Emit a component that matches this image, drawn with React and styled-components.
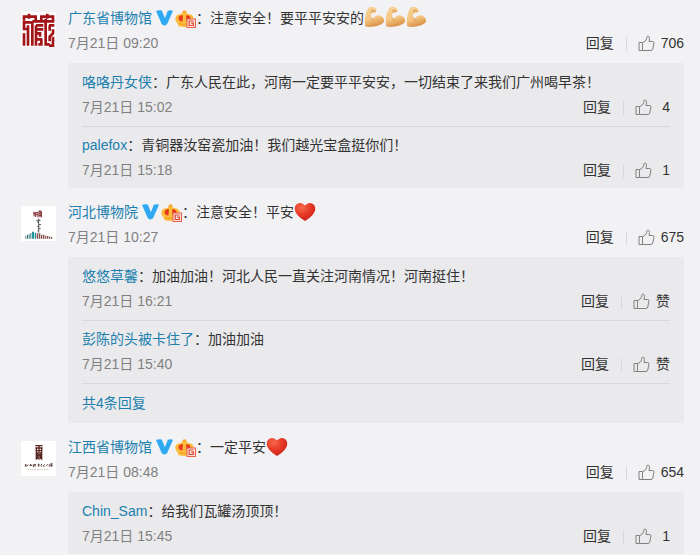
import React from "react";
import styled, { createGlobalStyle } from "styled-components";

const GlobalStyle = createGlobalStyle`
  body {
    margin: 0;
    background: #f2f2f5;
    color: #333;
    font-family: "Liberation Sans", "Noto Sans CJK SC", sans-serif;
    font-size: 14px;
    line-height: 25px;
  }
`;

const List = styled.main`
  display: flex;
  flex-direction: column;
  gap: 12px;
  padding: 6px 16px 12px 21px;
`;

const Comment = styled.article`
  display: flex;
  gap: 12px;
`;

const Avatar = styled.a`
  flex: none;
  width: 35px;
  height: 35px;
  margin-top: 6px;
  background: #fff;

  svg {
    display: block;
  }
`;

const Body = styled.div`
  flex: 1;
  min-width: 0;
`;

const Text = styled.div`
  svg {
    vertical-align: -5px;
  }
`;

const UserLink = styled.a`
  color: #217fae;
  text-decoration: none;

  &:hover {
    text-decoration: underline;
  }
`;

const Badges = styled.span`
  display: inline-flex;
  gap: 2px;
  margin-left: 4px;
  vertical-align: -3px;

  svg {
    vertical-align: top;
  }
`;

const Meta = styled.div`
  display: flex;
  justify-content: space-between;
  color: #808080;
`;

const Actions = styled.div`
  display: flex;
  align-items: center;
`;

const ActionButton = styled.button`
  display: flex;
  align-items: center;
  gap: 6px;
  padding: 0;
  border: 0;
  background: none;
  color: #333;
  font: inherit;
  cursor: pointer;
`;

const Divider = styled.span`
  width: 1px;
  height: 14px;
  margin: 0 11px 0 12px;
  background: #d9d9db;
`;

const Count = styled.span`
  min-width: 12px;
  text-align: right;
`;

const ReplyBox = styled.div`
  margin-top: 7px;
  padding: 1px 14px 0;
  background: #eaeaec;
`;

const Reply = styled.div`
  padding: 6px 0;

  & + & {
    border-top: 1px solid #d9d9db;
  }

  &:last-child {
    padding-bottom: 5px;
  }
`;

const MoreReplies = styled.div`
  padding: 7px 0;
  border-top: 1px solid #d9d9db;
`;

function SealLogo() {
  return (
    <svg width="35" height="35" viewBox="0 0 105 105" aria-hidden="true">
      <g fill="none" stroke="#a31419" strokeWidth="8">
        <path d="M5 14H48M57 14H100M24 5V20M79 5V20M9 14V26M96 14V26M44 14V24M61 14V24" />
        <path d="M5 31H31M9 31V55M5 51H20M21 40V101M9 101V64M5 97H13" />
        <path d="M34 28H100M34 28V101" />
        <path d="M45 40H67M45 40V52H67M45 52V101M57 62V74M45 64H61" />
        <path d="M45 82H64M61 82V101M52 97H61" />
        <path d="M74 20V97H86M84 40H100M86 40V56M96 52V64L86 74V88M96 74V101H84" />
      </g>
    </svg>
  );
}

function HebeiLogo() {
  return (
    <svg width="35" height="35" viewBox="0 0 105 105" aria-hidden="true">
      <g fill="none" stroke="#7c2428" strokeWidth="3">
        <path d="M37 22H42M39 17V31M44 19V33M44 20H51M51 17V34M53 16H62M57 13V34M53 22H62M53 28H61" />
        <path d="M43 26H51M61 17V34" />
      </g>
      <path
        d="M53 38V80M46 43H58M48 48H54M53 56H60M49 62H55M53 68H59M50 75H54"
        fill="none"
        stroke="#555"
        strokeWidth="3"
      />
      <path d="M13 98V89H16V98ZM18 98V86H21V98ZM23 98V85H26V98ZM28 98V81H31V98Z" fill="#377b80" />
      <path d="M33 98V77H39V98ZM41 98V80H45V98Z" fill="#27959a" />
      <path
        d="M47 98V82H52V98ZM54 98V82H58V98ZM60 98V86H64V98ZM66 98V86H70V98ZM72 98V89H76V98ZM78 98V90H82V98ZM84 98V92H88V98ZM90 98V93H94V98Z"
        fill="#865250"
      />
    </svg>
  );
}

function JiangxiLogo() {
  return (
    <svg width="35" height="35" viewBox="0 0 105 105" aria-hidden="true">
      <g fill="none" stroke="#5a2622" strokeWidth="4">
        <path d="M43 14H65M43 21H65M46 21V56M62 21V56M54 14V56" />
        <path d="M46 29H62M50 34V54M58 34V54M46 42H62" />
      </g>
      <g fill="none" stroke="#5b3b39" strokeWidth="3">
        <path d="M11 75L17 72M14 69V77M18 76L22 71M26 73H33M29 69V75M37 70V78M40 71H45M42 69V77" />
        <path d="M50 72H56M53 68V77M59 72L63 69M61 73V77M67 74L71 70M69 74V78M76 75L80 70M85 70V77M88 69H95M91 67V77M88 74H95" />
      </g>
      <path d="M20 86H84" stroke="#aa9594" strokeWidth="2" strokeDasharray="4 3" />
    </svg>
  );
}

function VerifiedIcon() {
  return (
    <svg width="17" height="16" viewBox="0 0 17 16" aria-hidden="true">
      <path
        d="M0 1Q3-.3 5.8.6L8.9 8.2 11.8.8Q14.4-.3 17 .7L11.4 13.6Q10.4 15.6 8.4 15.6T5.6 13.8Z"
        fill="#2fa9f2"
      />
    </svg>
  );
}

function MemberIcon() {
  return (
    <svg width="21" height="18" viewBox="0 0 21 18" aria-hidden="true">
      <circle cx="9.5" cy="2.3" r="2.1" fill="#f9ad31" />
      <path
        d="M3.2 16Q3.4 14.4 2 12.8-.2 10.4.5 7.4 1.8 4 5.2 4.2 7.2 2.9 9.5 2.9T13.8 4.2Q17.2 4 18.5 7.4 19.2 10.4 17 12.8L16 16Q9.5 18 3.2 16Z"
        fill="#fcbd3c"
      />
      <path
        d="M8 5.4Q6.6 4.8 5.2 5.6 3.2 6.6 3.5 9 3.9 11 7.4 11.8ZM11 5.4Q12.4 4.8 13.8 5.6 15.8 6.6 15.5 9 15.1 11 11.6 11.8Z"
        fill="#e73a1c"
      />
      <path d="M4 13.6Q9.5 15 12 14" fill="none" stroke="#f59a23" />
      <rect x="12" y="9" width="8.5" height="8.5" fill="#fbe3dc" stroke="#ea5f4a" />
      <path d="M18.6 11H14.2V15.5H18.4V13.2H16.2" fill="none" stroke="#e04a35" strokeWidth="1.2" />
    </svg>
  );
}

function LikeIcon() {
  return (
    <svg width="17" height="17" viewBox="0 0 17 17" aria-hidden="true">
      <path
        d="M1 7.5H4.5V15.5H1ZM4.5 8L8 5.2Q8.8 4 8.8 2.2 9 .9 10.2 1.1 11.6 1.4 11.5 3.3L11 6.5H14.6Q16.2 6.6 15.9 8.2L14.8 13.9Q14.4 15.4 13 15.5H4.5"
        fill="none"
        stroke="#808080"
        strokeLinejoin="round"
      />
    </svg>
  );
}

function Muscle() {
  return (
    <svg width="21" height="22" viewBox="0 0 21 22" role="img" aria-label="加油">
      <defs>
        <linearGradient id="skin" x1="0" y1="0" x2=".3" y2="1">
          <stop offset="0" stopColor="#f8d398" />
          <stop offset=".65" stopColor="#f4c581" />
          <stop offset="1" stopColor="#dc944d" />
        </linearGradient>
      </defs>
      <path
        d="M4.4 1.8Q6.5.2 9.3.9L12 2.5Q13.1 4.1 12 6L9.5 7.3Q8 7.3 7.2 6.8 6.7 9.5 7.8 12.2 9 12.9 10.3 11 12.5 8.7 16 9.5 20.2 11.2 20.2 15.5 17.5 19.4 11.5 20.2 5.5 21.5 1.4 20.5.3 17.5.9 12.5 1.4 6.4 4.4 1.8Z"
        fill="url(#skin)"
      />
      <path d="M7.8 3.8L11.8 5.6M7.2 6.8Q8 6.4 8.3 4.6M7.8 12.2Q8.1 14 9.6 14.8" fill="none" stroke="#c98442" strokeWidth=".8" />
    </svg>
  );
}

function Heart() {
  return (
    <svg width="22" height="20" viewBox="0 0 22 20" role="img" aria-label="心">
      <defs>
        <radialGradient id="heart" cx=".35" cy=".25" r=".8">
          <stop offset="0" stopColor="#f66a4c" />
          <stop offset=".5" stopColor="#e83a26" />
          <stop offset="1" stopColor="#c81f1a" />
        </radialGradient>
      </defs>
      <path
        d="M11 3.6Q8.8.6 5.6 1 .7 1.8.7 7.2 1.2 13 11 19 20.8 13 21.3 7.2 21.3 1.8 16.4 1 13.2.6 11 3.6Z"
        fill="url(#heart)"
      />
    </svg>
  );
}

const comments = [
  {
    user: "广东省博物馆",
    logo: <SealLogo />,
    text: (
      <>
        注意安全！要平平安安的
        <Muscle />
        <Muscle />
        <Muscle />
      </>
    ),
    time: "7月21日 09:20",
    likes: "706",
    replies: [
      {
        user: "咯咯丹女侠",
        text: "广东人民在此，河南一定要平平安安，一切结束了来我们广州喝早茶！",
        time: "7月21日 15:02",
        likes: "4",
      },
      {
        user: "palefox",
        text: "青铜器汝窑瓷加油！我们越光宝盒挺你们！",
        time: "7月21日 15:18",
        likes: "1",
      },
    ],
  },
  {
    user: "河北博物院",
    logo: <HebeiLogo />,
    text: (
      <>
        注意安全！平安
        <Heart />
      </>
    ),
    time: "7月21日 10:27",
    likes: "675",
    replies: [
      {
        user: "悠悠草馨",
        text: "加油加油！河北人民一直关注河南情况！河南挺住！",
        time: "7月21日 16:21",
        likes: "赞",
      },
      {
        user: "彭陈的头被卡住了",
        text: "加油加油",
        time: "7月21日 15:40",
        likes: "赞",
      },
    ],
    more: "共4条回复",
  },
  {
    user: "江西省博物馆",
    logo: <JiangxiLogo />,
    text: (
      <>
        一定平安
        <Heart />
      </>
    ),
    time: "7月21日 08:48",
    likes: "654",
    replies: [
      {
        user: "Chin_Sam",
        text: "给我们瓦罐汤顶顶！",
        time: "7月21日 15:45",
        likes: "1",
      },
    ],
  },
];

function MetaRow({ time, likes }) {
  return (
    <Meta>
      <time>{time}</time>
      <Actions>
        <ActionButton type="button">回复</ActionButton>
        <Divider />
        <ActionButton type="button">
          <LikeIcon />
          <Count>{likes}</Count>
        </ActionButton>
      </Actions>
    </Meta>
  );
}

function App() {
  return (
    <>
      <GlobalStyle />
      <List lang="zh-CN">
        {comments.map((item) => (
          <Comment key={item.user}>
            <Avatar href="#" aria-label={item.user}>
              {item.logo}
            </Avatar>
            <Body>
              <Text>
                <UserLink href="#">{item.user}</UserLink>
                <Badges>
                  <VerifiedIcon />
                  <MemberIcon />
                </Badges>
                ：{item.text}
              </Text>
              <MetaRow time={item.time} likes={item.likes} />
              <ReplyBox>
                {item.replies.map((reply) => (
                  <Reply key={reply.user}>
                    <UserLink href="#">{reply.user}</UserLink>：{reply.text}
                    <MetaRow time={reply.time} likes={reply.likes} />
                  </Reply>
                ))}
                {/* 更多回复 */}
                {item.more && (
                  <MoreReplies>
                    <UserLink href="#">{item.more}</UserLink>
                  </MoreReplies>
                )}
              </ReplyBox>
            </Body>
          </Comment>
        ))}
      </List>
    </>
  );
}

export default App;
